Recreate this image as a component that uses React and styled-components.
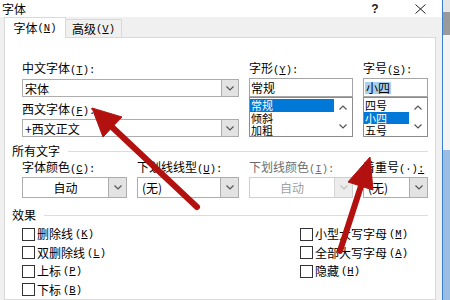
import React from "react";
import styled, { createGlobalStyle } from "styled-components";

const GlobalStyle = createGlobalStyle`
  html, body {
    margin: 0;
    padding: 0;
    background: #f0f0f0;
  }
  body {
    font-family: "Noto Sans CJK SC", "Noto Sans", sans-serif;
    font-size: 12px;
    color: #000;
  }
`;

const Screen = styled.div`
  position: relative;
  width: 450px;
  height: 300px;
  overflow: hidden;
  display: flex;
`;

const Dialog = styled.div`
  width: 442px;
  border-right: 1px solid #3b7fd0;
  background: #f0f0f0;
  display: flex;
  flex-direction: column;
`;

const Backdrop = styled.div`
  flex: 1;
  background: linear-gradient(
    to bottom,
    #e6e6e6 0 12px,
    #9a9a9a 12px 35px,
    #f4f4f4 35px 150px,
    #9cbde3 150px
  );
`;

const TitleBar = styled.div`
  height: 25px;
  background: #fff;
  display: flex;
  align-items: center;
  padding-left: 2px;
`;

const Title = styled.span`
  flex: 1;
  line-height: 16px;
`;

const TitleButton = styled.span`
  width: ${(p) => p.$w}px;
  display: flex;
  justify-content: center;
  align-items: center;
  font-family: "Liberation Sans", sans-serif;
  font-weight: bold;
  font-size: 12px;
  color: #222;
`;

const TabStrip = styled.div`
  height: 27px;
  margin-bottom: -1px;
  padding-left: 4px;
  display: flex;
  align-items: flex-end;
  position: relative;
  z-index: 1;
`;

const Tab = styled.div`
  box-sizing: border-box;
  width: ${(p) => (p.$active ? 62 : 56)}px;
  height: ${(p) => (p.$active ? 21 : 18)}px;
  margin-bottom: ${(p) => (p.$active ? 0 : 1)}px;
  border: 1px solid #d9d9d9;
  border-bottom: none;
  border-left: ${(p) => (p.$active ? "1px solid #d9d9d9" : "none")};
  background: ${(p) => (p.$active ? "#fff" : "#f0f0f0")};
  display: flex;
  justify-content: center;
  align-items: center;
  line-height: 16px;
`;

const Panel = styled.div`
  flex: 1;
  margin: 0 6px 0 4px;
  background: #fff;
  border: 1px solid #d9d9d9;
  padding: 24px 7px 0 7px;
`;

const Key = styled.span`
  font-family: "Liberation Mono", monospace;
  font-size: 10.5px;
  u {
    text-underline-offset: 1px;
  }
`;

const FontGrid = styled.div`
  display: grid;
  grid-template-columns: 105px 102px 104px 65px;
  grid-template-rows: 16px 19px 22px 18px;
  column-gap: 10px;
  padding-left: 10px;
`;

const StyleGrid = styled(FontGrid)`
  grid-template-rows: 16px 21px;
  margin-top: 2px;
`;

const FieldLabel = styled.div`
  grid-column: ${(p) => p.$col || "auto"};
  grid-row: ${(p) => p.$row || "auto"};
  align-self: end;
  line-height: 16px;
  white-space: nowrap;
  color: ${(p) => (p.$disabled ? "#6d6d6d" : "#000")};
`;

const Combo = styled.div`
  grid-column: ${(p) => p.$col || "auto"};
  grid-row: ${(p) => p.$row || "auto"};
  align-self: end;
  box-sizing: border-box;
  height: ${(p) => p.$h}px;
  display: flex;
  background: #fff;
  border: 1px solid ${(p) => (p.$disabled ? "#cfcfcf" : "#adadad")};
`;

const ComboText = styled.div`
  flex: 1;
  display: flex;
  align-items: center;
  justify-content: ${(p) => (p.$center ? "center" : "flex-start")};
  padding-left: ${(p) => (p.$center ? 0 : p.$pad ?? 2)}px;
  color: ${(p) => (p.$disabled ? "#a0a0a0" : "#000")};
  white-space: nowrap;
`;

const DropButton = styled.div`
  width: ${(p) => p.$w || 16}px;
  background: ${(p) => (p.$disabled ? "#ececec" : "#e3e3e3")};
  border-left: 1px solid ${(p) => (p.$disabled ? "#d6d6d6" : "#adadad")};
  display: flex;
  justify-content: center;
  align-items: center;
`;

const TextBox = styled.div`
  grid-column: ${(p) => p.$col};
  grid-row: 2;
  box-sizing: border-box;
  height: 19px;
  border: 1px solid #a5a5a5;
  background: #fff;
  padding-left: 1px;
  display: flex;
  align-items: center;
`;

const Selected = styled.span`
  background: #a9d0f1;
  padding: 0 1px;
  line-height: 12px;
`;

const ListBox = styled.div`
  grid-column: ${(p) => p.$col};
  grid-row: 3 / 5;
  box-sizing: border-box;
  border: 1px solid #8c8c8c;
  background: #fff;
  display: flex;
  overflow: hidden;
`;

const ListItems = styled.div`
  flex: 1;
  padding-top: 1px;
`;

const ListItem = styled.div`
  height: 12.5px;
  line-height: 12.5px;
  font-size: 11px;
  padding-left: 1px;
  background: ${(p) => (p.$selected ? "#0078d7" : "transparent")};
  color: ${(p) => (p.$selected ? "#fff" : "#000")};
`;

const ScrollCol = styled.div`
  width: 18px;
  padding: 7px 0;
  display: flex;
  flex-direction: column;
  justify-content: space-between;
  align-items: center;
`;

const SectionHead = styled.div`
  margin-top: ${(p) => p.$mt}px;
  display: flex;
  align-items: center;
  gap: 8px;
  line-height: 16px;
  &::after {
    content: "";
    flex: 1;
    height: 1px;
    background: #dcdcdc;
  }
`;

const Effects = styled.div`
  margin-top: 2px;
  padding-left: 10px;
  display: grid;
  grid-template-columns: 278px auto;
  grid-template-rows: repeat(4, 18.5px);
  grid-auto-flow: column;
`;

const Check = styled.div`
  display: flex;
  align-items: center;
  gap: 2px;
  line-height: 16px;
  white-space: nowrap;
`;

const Box = styled.span`
  box-sizing: border-box;
  width: 13px;
  height: 13px;
  border: 1px solid #333;
  background: #fff;
`;

const ArrowLayer = styled.svg`
  position: absolute;
  left: 0;
  top: 0;
  pointer-events: none;
`;

const Hot = ({ k, colon = true }) => (
  <Key>
    (<u>{k}</u>){colon ? ":" : ""}
  </Key>
);

const Chevron = ({ up, w = 8, h = 5, color = "#555" }) => (
  <svg width={w} height={h} viewBox="0 0 8 5">
    <polyline
      points={up ? "0.5,4.5 4,1 7.5,4.5" : "0.5,0.5 4,4 7.5,0.5"}
      fill="none"
      stroke={color}
      strokeWidth="1.2"
    />
  </svg>
);

const Close = () => (
  <svg width="11" height="10" viewBox="0 0 11 10">
    <path d="M0.5 0.5 L10.5 9.5 M10.5 0.5 L0.5 9.5" stroke="#222" strokeWidth="1" />
  </svg>
);

const List = ({ col, items, selected }) => (
  <ListBox $col={col}>
    <ListItems>
      {items.map((it) => (
        <ListItem key={it} $selected={it === selected}>
          {it}
        </ListItem>
      ))}
    </ListItems>
    <ScrollCol>
      <Chevron up />
      <Chevron />
    </ScrollCol>
  </ListBox>
);

const DropCombo = ({ h, text, center, pad, disabled, btn }) => (
  <Combo $h={h} $disabled={disabled}>
    <ComboText $center={center} $pad={pad} $disabled={disabled}>
      {text}
    </ComboText>
    <DropButton $w={btn} $disabled={disabled}>
      <Chevron color={disabled ? "#c0c0c0" : "#555"} />
    </DropButton>
  </Combo>
);

export default function App() {
  return (
    <>
      <GlobalStyle />
      <Screen>
        <Dialog>
          <TitleBar>
            <Title>字体</Title>
            <TitleButton $w={46}>?</TitleButton>
            <TitleButton $w={44}>
              <Close />
            </TitleButton>
          </TitleBar>
          <TabStrip>
            <Tab $active>
              字体<Hot k="N" colon={false} />
            </Tab>
            <Tab>
              高级<Hot k="V" colon={false} />
            </Tab>
          </TabStrip>
          <Panel>
            <FontGrid>
              <FieldLabel $col="1 / 3" $row="1">
                中文字体<Hot k="T" />
              </FieldLabel>
              <Combo $col="1 / 3" $row="2" $h={18}>
                <ComboText>宋体</ComboText>
                <DropButton>
                  <Chevron />
                </DropButton>
              </Combo>
              <FieldLabel $col="1 / 3" $row="3">
                西文字体<Hot k="F" />
              </FieldLabel>
              <Combo $col="1 / 3" $row="4" $h={18}>
                <ComboText>+西文正文</ComboText>
                <DropButton>
                  <Chevron />
                </DropButton>
              </Combo>

              <FieldLabel $col="3" $row="1">
                字形<Hot k="Y" />
              </FieldLabel>
              <TextBox $col={3}>常规</TextBox>
              <List col={3} items={["常规", "倾斜", "加粗"]} selected="常规" />

              <FieldLabel $col="4" $row="1">
                字号<Hot k="S" />
              </FieldLabel>
              <TextBox $col={4}>
                <Selected>小四</Selected>
              </TextBox>
              <List col={4} items={["四号", "小四", "五号"]} selected="小四" />
            </FontGrid>

            <SectionHead $mt={6}>所有文字</SectionHead>
            <StyleGrid>
              <FieldLabel>
                字体颜色<Hot k="C" />
              </FieldLabel>
              <FieldLabel>
                下划线线型<Hot k="U" />
              </FieldLabel>
              <FieldLabel $disabled>
                下划线颜色<Hot k="I" />
              </FieldLabel>
              <FieldLabel>
                着重号<Key>(·)<u>:</u></Key>
              </FieldLabel>

              <DropCombo h={21} btn={17} text="自动" center />
              <DropCombo h={21} btn={17} text="(无)" pad={4} />
              <DropCombo h={21} btn={17} text="自动" center disabled />
              <DropCombo h={21} btn={17} text="(无)" pad={4} />
            </StyleGrid>

            <SectionHead $mt={9}>效果</SectionHead>
            <Effects>
              <Check>
                <Box />
                删除线<Hot k="K" colon={false} />
              </Check>
              <Check>
                <Box />
                双删除线<Hot k="L" colon={false} />
              </Check>
              <Check>
                <Box />
                上标<Hot k="P" colon={false} />
              </Check>
              <Check>
                <Box />
                下标<Hot k="B" colon={false} />
              </Check>
              <Check>
                <Box />
                小型大写字母<Hot k="M" colon={false} />
              </Check>
              <Check>
                <Box />
                全部大写字母<Hot k="A" colon={false} />
              </Check>
              <Check>
                <Box />
                隐藏<Hot k="H" colon={false} />
              </Check>
            </Effects>
          </Panel>
        </Dialog>
        <Backdrop />

        <ArrowLayer width="450" height="300" viewBox="0 0 450 300">
          <g fill="#b3110f" stroke="#b3110f">
            <line x1="197" y1="207" x2="112" y2="127" strokeWidth="6" strokeLinecap="round" />
            <polygon points="92,108 122,117 103,137" strokeWidth="1" strokeLinejoin="round" />
            <line x1="340" y1="251" x2="361" y2="186" strokeWidth="6" strokeLinecap="round" />
            <polygon points="370,157 373,190 348,182" strokeWidth="1" strokeLinejoin="round" />
          </g>
        </ArrowLayer>
      </Screen>
    </>
  );
}
